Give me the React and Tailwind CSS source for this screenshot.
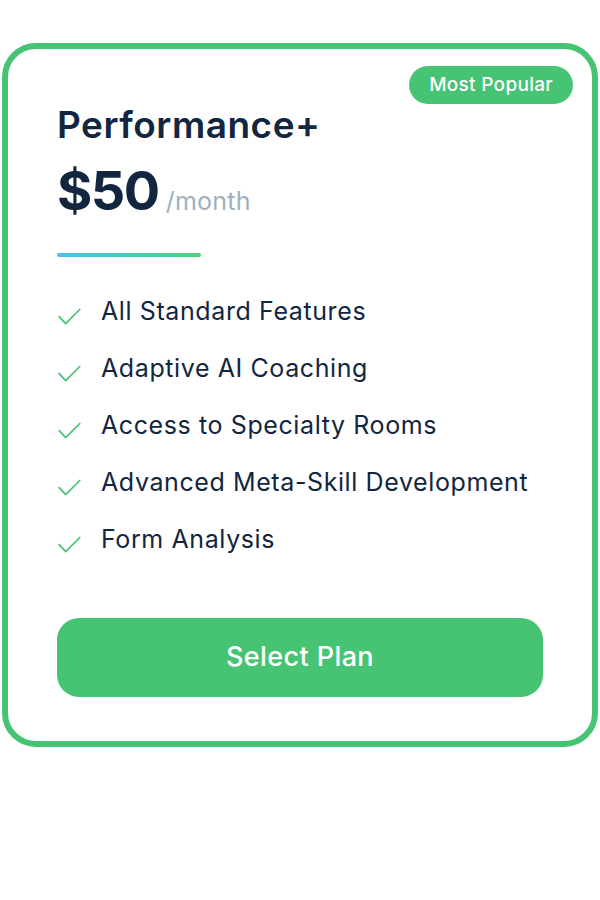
const features = [
  "All Standard Features",
  "Adaptive AI Coaching",
  "Access to Specialty Rooms",
  "Advanced Meta-Skill Development",
  "Form Analysis",
];

const Check = () => (
  <svg className="w-[26px] h-[26px] shrink-0 mt-[10px]" viewBox="0 0 24 24" fill="none" stroke="#46c474" strokeWidth="1.6" strokeLinecap="round" strokeLinejoin="round">
    <path d="M2 12.5l6 6.5L21 6" />
  </svg>
);

export default function App() {
  return (
    <div className="bg-white min-h-[900px] w-[600px] pt-[43px] px-[2px]" style={{ fontFamily: "Inter, 'Noto Sans', sans-serif" }}>
      <div className="relative border-[6px] border-[#46c474] rounded-[34px] pl-[49px] pr-[49px] pt-[52px] pb-[44px]">
        <span className="absolute top-[17px] right-[19px] bg-[#46c474] text-white text-[19px] tracking-[0.3px] font-medium rounded-full px-[20px] h-[38px] flex items-center">
          Most Popular
        </span>
        <h2 className="text-[37px] tracking-[0.5px] font-semibold text-[#12263f] leading-[48px]">Performance+</h2>
        <div className="flex items-baseline gap-[7px] mt-[12px]">
          <span className="text-[54px] tracking-[-1.5px] font-bold text-[#12263f] leading-[60px]">$50</span>
          <span className="text-[25px] tracking-[0.2px] text-[#9db0c0]">/month</span>
        </div>
        <div className="w-[144px] h-[4px] rounded-full bg-gradient-to-r from-[#4fc0ee] to-[#50d078] mt-[32px]" />
        <ul className="mt-[36px] flex flex-col gap-[21px]">
          {features.map((f) => (
            <li key={f} className="flex items-start gap-[18px] text-[25px] tracking-[0.6px] text-[#12263f] leading-[36px]">
              <Check />
              <span>{f}</span>
            </li>
          ))}
        </ul>
        <button className="w-full h-[79px] mt-[61px] rounded-[22px] bg-[#46c474] text-white text-[27px] tracking-[0.4px] font-medium">
          Select Plan
        </button>
      </div>
    </div>
  );
}
